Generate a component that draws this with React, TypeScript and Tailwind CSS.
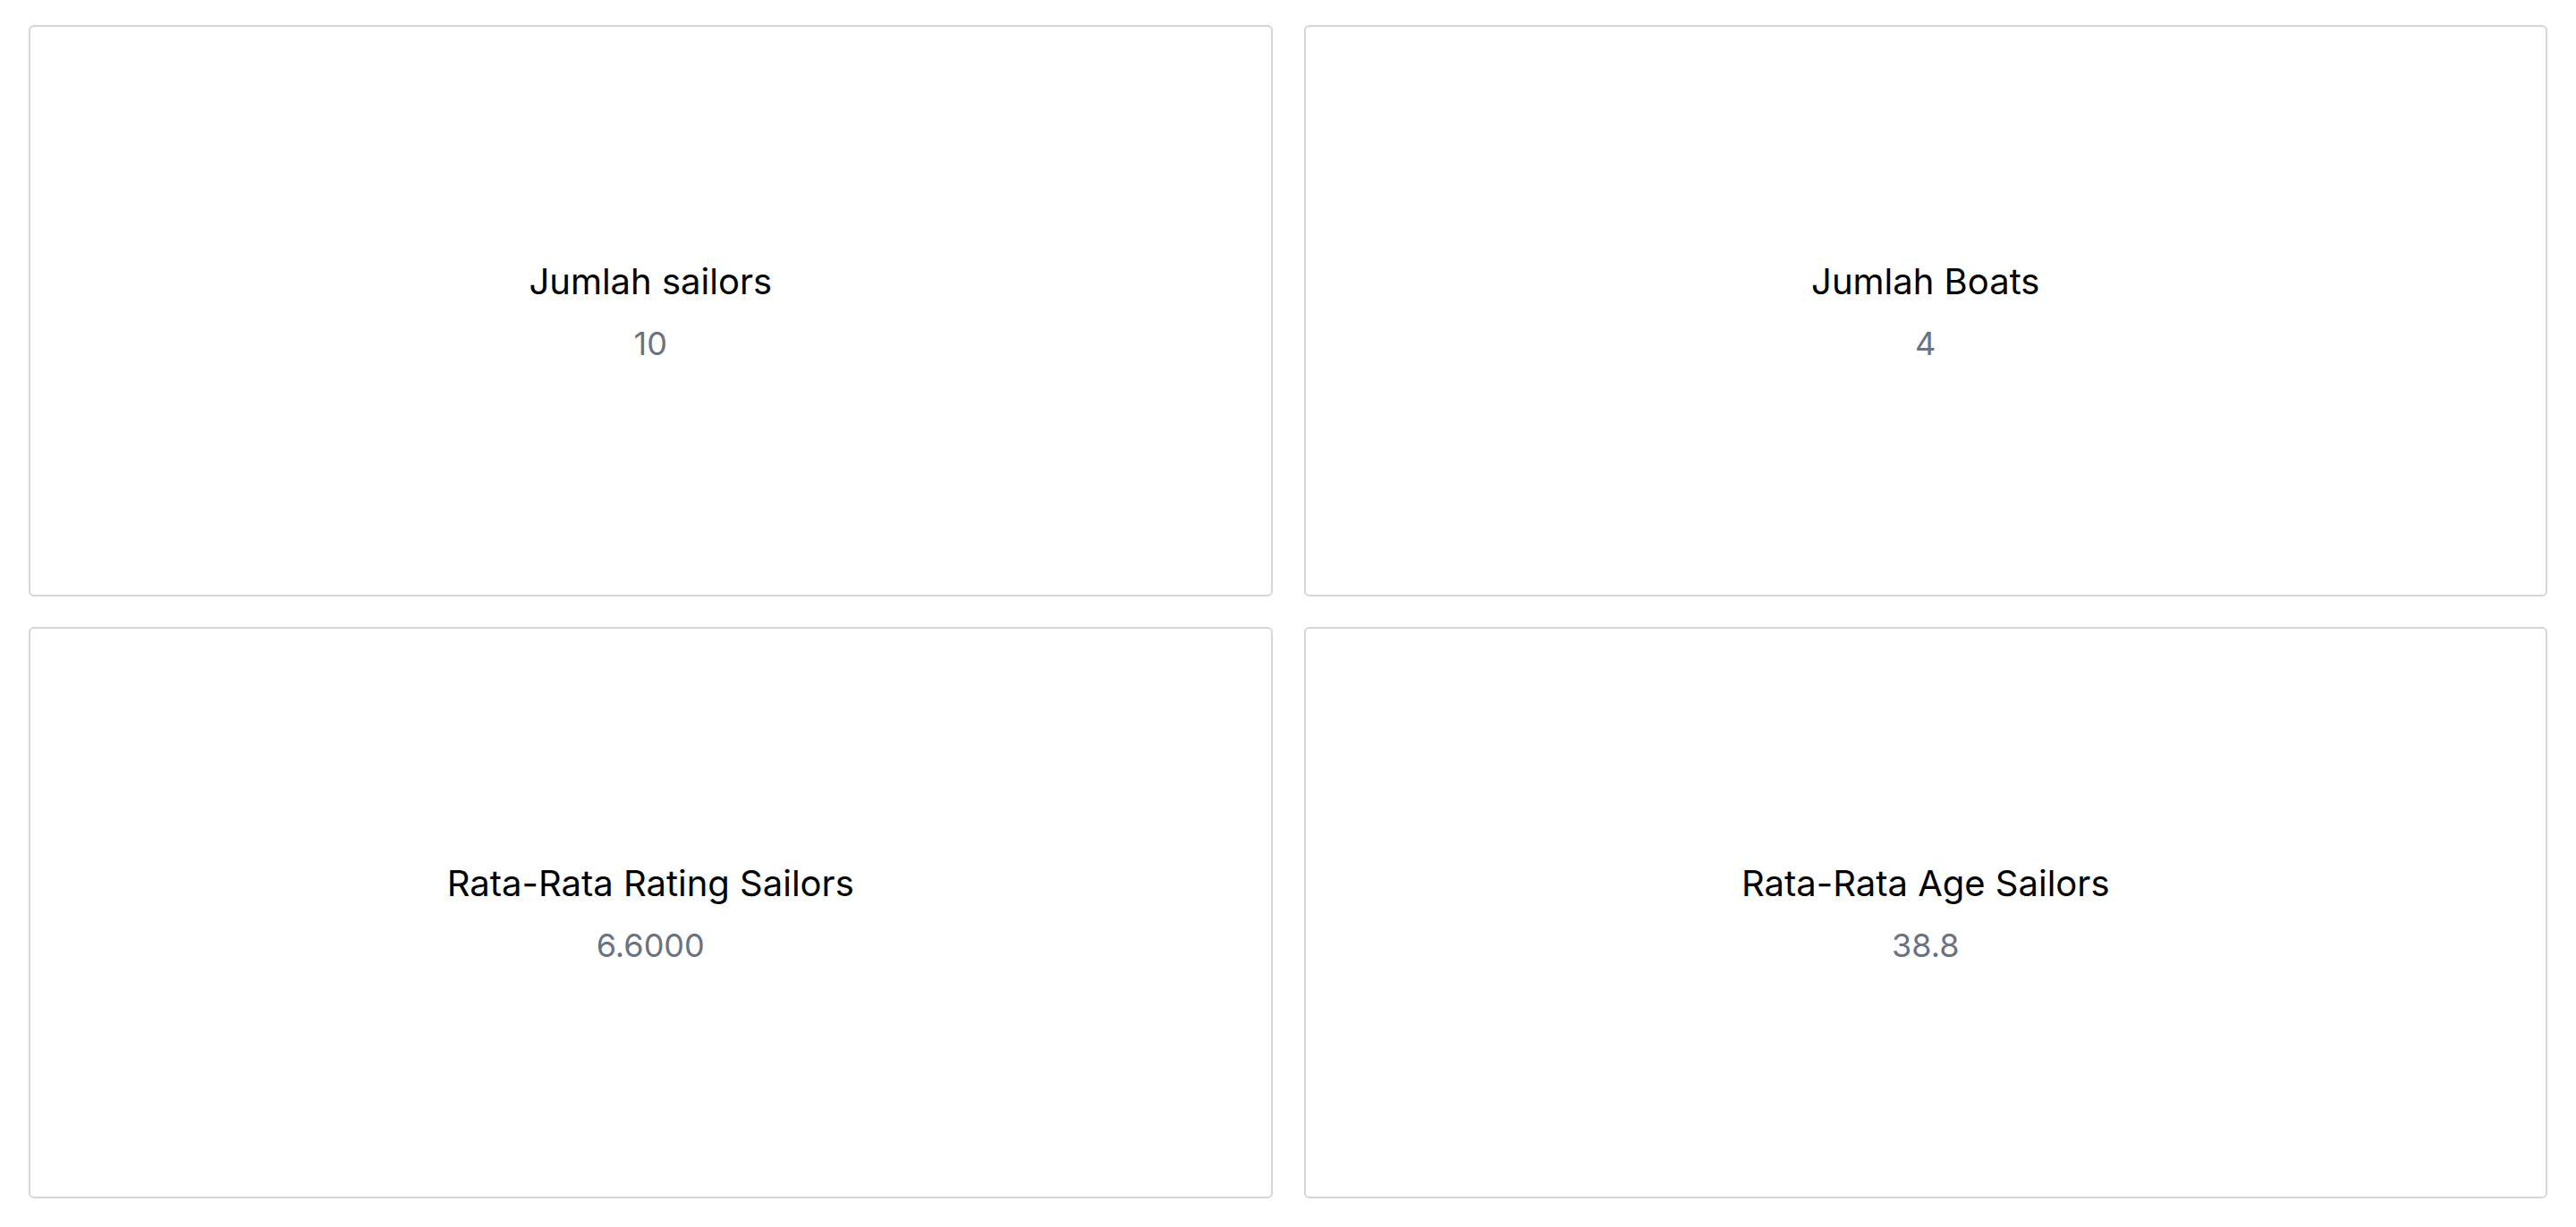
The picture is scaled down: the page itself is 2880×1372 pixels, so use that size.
import React from "react";

const cards = [
  { title: "Jumlah sailors", value: "10" },
  { title: "Jumlah Boats", value: "4" },
  { title: "Rata-Rata Rating Sailors", value: "6.6000" },
  { title: "Rata-Rata Age Sailors", value: "38.8" },
];

export default function App() {
  return (
    <div
      className="grid h-[1372px] w-[2880px] grid-cols-2 grid-rows-2 gap-x-[35px] gap-y-[34px] bg-white pt-[28px] pb-[32px] pl-[32px] pr-[32px]"
      style={{ fontFamily: "Inter, 'Noto Sans', sans-serif" }}
    >
      {cards.map((c) => (
        <div
          key={c.title}
          className="flex flex-col items-center justify-center rounded-[6px] border-2 border-[#d4d6da] bg-white"
        >
          <div className="text-[40px] leading-[60px] text-black">{c.title}</div>
          <div className="mt-[12px] text-[36px] leading-[54px] text-[#6b7280]">{c.value}</div>
        </div>
      ))}
    </div>
  );
}
